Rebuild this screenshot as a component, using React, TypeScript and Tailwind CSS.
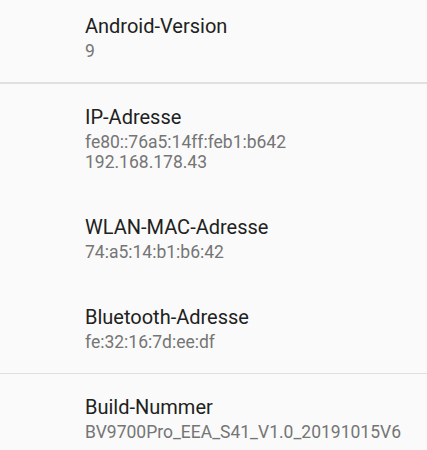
import React from "react";

type Item = { title: string; lines: string[]; divider?: boolean };

const items: Item[] = [
  { title: "Android-Version", lines: ["9"], divider: true },
  { title: "IP-Adresse", lines: ["fe80::76a5:14ff:feb1:b642", "192.168.178.43"] },
  { title: "WLAN-MAC-Adresse", lines: ["74:a5:14:b1:b6:42"] },
  { title: "Bluetooth-Adresse", lines: ["fe:32:16:7d:ee:df"], divider: true },
  { title: "Build-Nummer", lines: ["BV9700Pro_EEA_S41_V1.0_20191015V6"] },
];

export default function App() {
  return (
    <div
      className="w-[427px] h-[450px] overflow-hidden bg-[#fafafa]"
      style={{ fontFamily: "Roboto, 'Noto Sans', sans-serif" }}
    >
      <div className="-mt-[7px] flex flex-col">
        {items.map((it) => (
          <div key={it.title} className="flex flex-col">
            <div className="pl-[85px] pt-[21px] pb-[22px]">
              <div className="text-[20px] leading-[24px] text-[#212121]">{it.title}</div>
              <div className="mt-[3px] flex flex-col">
                {it.lines.map((l) => (
                  <div key={l} className="text-[17.5px] leading-[20px] text-[#757575]">
                    {l}
                  </div>
                ))}
              </div>
            </div>
            {it.divider && <div className="h-[1.5px] bg-[#e0e0e0] -mt-[1px]" />}
          </div>
        ))}
      </div>
    </div>
  );
}
